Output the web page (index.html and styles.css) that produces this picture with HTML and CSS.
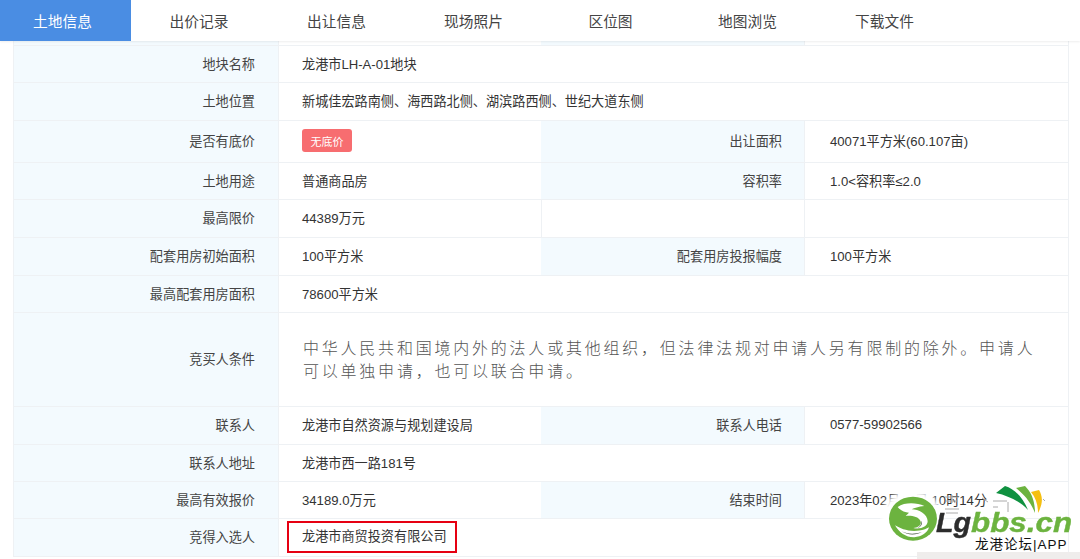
FILE: index.html
```html
<!DOCTYPE html>
<html lang="zh">
<head>
<meta charset="utf-8">
<title>土地信息</title>
<link rel="stylesheet" href="styles.css">
</head>
<body>
<nav class="tabs">
  <a class="tab active">土地信息</a>
  <a class="tab">出价记录</a>
  <a class="tab">出让信息</a>
  <a class="tab">现场照片</a>
  <a class="tab">区位图</a>
  <a class="tab">地图浏览</a>
  <a class="tab">下载文件</a>
</nav>
<main class="sheet">
  <div class="row r-stub"><div class="lab"></div><div class="val"></div><div class="lab"></div><div class="val"></div></div>
  <div class="row r37"><div class="lab">地块名称</div><div class="val wide">龙港市LH-A-01地块</div></div>
  <div class="row r38"><div class="lab">土地位置</div><div class="val wide">新城佳宏路南侧、海西路北侧、湖滨路西侧、世纪大道东侧</div></div>
  <div class="row r42"><div class="lab">是否有底价</div><div class="val"><span class="tag">无底价</span></div><div class="lab">出让面积</div><div class="val">40071平方米(60.107亩)</div></div>
  <div class="row r37"><div class="lab">土地用途</div><div class="val">普通商品房</div><div class="lab">容积率</div><div class="val">1.0&lt;容积率≤2.0</div></div>
  <div class="row r38"><div class="lab">最高限价</div><div class="val">44389万元</div><div class="val blank"></div><div class="val"></div></div>
  <div class="row r38"><div class="lab">配套用房初始面积</div><div class="val">100平方米</div><div class="lab">配套用房投报幅度</div><div class="val">100平方米</div></div>
  <div class="row r37"><div class="lab">最高配套用房面积</div><div class="val wide">78600平方米</div></div>
  <div class="row r94"><div class="lab">竞买人条件</div><div class="val wide"><p class="terms">中华人民共和国境内外的法人或其他组织，但法律法规对申请人另有限制的除外。申请人可以单独申请，也可以联合申请。</p></div></div>
  <div class="row r38"><div class="lab">联系人</div><div class="val">龙港市自然资源与规划建设局</div><div class="lab">联系人电话</div><div class="val">0577-59902566</div></div>
  <div class="row r37"><div class="lab">联系人地址</div><div class="val wide">龙港市西一路181号</div></div>
  <div class="row r37"><div class="lab">最高有效报价</div><div class="val">34189.0万元</div><div class="lab">结束时间</div><div class="val">2023年02月14日 10时14分</div></div>
  <div class="row r38"><div class="lab">竞得入选人</div><div class="val wide"><span class="winner">龙港市商贸投资有限公司</span></div></div>
</main>
<div class="corner-bar"></div>
<div class="logo">
  <svg class="logo-art" viewBox="880 483 200 76" width="200" height="76" aria-hidden="true">
    <defs><filter id="soft" x="-30%" y="-30%" width="160%" height="160%"><feGaussianBlur stdDeviation="2.5"/></filter></defs>
    <ellipse cx="912" cy="517" rx="31" ry="27" fill="#fff" filter="url(#soft)"/>
    <g stroke="#aaa" stroke-width="1" fill="none">
      <path d="M945 497h14M946 501h12M945 509h14M946 513h12M952 495v8"/>
      <path d="M993 501h14M1008 502v10M993 507h5M982 498l6 4M1043 499l2 2"/>
    </g>
    <g transform="translate(885 492) scale(.3333)">
      <ellipse cx="84" cy="80" rx="72" ry="66" fill="#6cb33f"/>
      <path d="M38 45C60 30 95 32 118 42 100 44 88 48 80 52 100 52 128 66 128 88 128 104 105 114 85 108 100 106 112 98 106 86 100 74 80 70 62 72L72 62C60 60 48 58 38 45z" fill="#fff"/>
      <path d="M30 100C50 112 80 124 120 112L132 106C128 122 110 134 88 136 64 137 42 122 30 100z" fill="#fff"/>
      <path d="M50 118C66 126 88 128 110 120 96 130 66 130 50 118zM90 110C100 108 112 100 108 86 116 96 106 108 90 110z" fill="#4a5a44"/>
    </g>
    <path d="M996 493L1005 486C1015 489 1023 498 1028 510 1022 503 1010 496 996 493z" fill="#0f9140"/>
    <path d="M1016 488L1025 486C1031 492 1035 500 1035 513 1031 503 1025 495 1016 488z" fill="#6cb33f"/>
    <path d="M1031 492L1039 490C1042 495 1044 502 1038 513 1038 505 1036 498 1031 492z" fill="#f5bf10"/>
  </svg>
  <span class="logo-lg">Lg</span>
  <span class="logo-bbs">bbs.cn</span>
  <span class="logo-sub">龙港论坛|APP</span>
</div>
</body>
</html>
```
FILE: styles.css
```css
* { box-sizing: border-box; }
html, body { margin: 0; height: 559px; overflow: hidden; background: #fff; }
body { font-family: "Liberation Sans", "Noto Sans CJK SC", sans-serif; font-size: 13.15px; color: #333; position: relative; }
.tabs { display: flex; height: 41px; background: #fff; position: relative; z-index: 2; box-shadow: 0 1px 2px rgba(0,0,0,.07); }
.tab { width: 137px; flex: none; display: flex; align-items: center; justify-content: center; font-size: 14.7px; color: #444; padding-right: 2px; }
.tab.active { width: 131px; background: #4a8de3; color: #fff; padding-right: 6px; }
.tab:nth-child(2) { width: 138px; }
.sheet { width: 1056px; margin-left: 13px; border-left: 1px solid #eef1f4; border-right: 1px solid #eef1f4; }
.row { display: grid; grid-template-columns: 265px 262px 264px 1fr; border-bottom: 1px solid #eef1f4; }
.r-stub { height: 5px; }
.r37 { height: 37px; }
.r38 { height: 38px; }
.r42 { height: 42px; }
.r94 { height: 94px; }
.lab { background: #f3fafe; padding: 0 23px 2px 0; display: flex; align-items: center; justify-content: flex-end; color: #444; border-right: 1px solid #eef1f4; }
.lab:nth-child(3) { padding-right: 22px; }
.val { padding: 0 0 2px 23px; display: flex; align-items: center; color: #333; }
.val:nth-child(4) { padding-left: 25px; }
.val.blank { border-right: 1px solid #eef1f4; border-left: 1px solid #eef1f4; }
.val.wide { grid-column: 2 / 5; }
.tag { background: #f76d70; color: #fff; font-size: 11px; width: 50px; height: 23px; border-radius: 3px; display: flex; align-items: center; justify-content: center; }
.terms { margin: 0; width: 745px; padding: 1px 0 0 1px; font-family: "Noto Sans CJK SC", sans-serif; font-weight: 300; font-size: 16px; line-height: 23px; letter-spacing: 2.78px; color: #555; }
.winner { border: 2px solid #e60012; padding: 5px 8px 5px 13px; margin: 0 0 0 -15px; line-height: 18px; white-space: nowrap; }
.corner-bar { position: absolute; left: 917px; top: 552px; width: 163px; height: 7px; background: #efedec; z-index: 3; }
.logo { position: absolute; left: 880px; top: 483px; width: 200px; height: 76px; z-index: 4; }
.logo-art { position: absolute; left: 0; top: 0; }
.logo-lg, .logo-bbs { position: absolute; top: 25px; font-family: "Liberation Sans", sans-serif; font-weight: 700; font-style: italic; font-size: 27.5px; line-height: 30px; transform-origin: left center; -webkit-text-stroke: .4px currentColor; }
.logo-lg { left: 56px; color: #2c2c2c; transform: scaleX(1.04); }
.logo-bbs { left: 91px; color: #6cb33f; transform: scaleX(1.14); }
.logo-sub { position: absolute; left: 95px; top: 53px; font-size: 13.5px; line-height: 17px; color: #111; letter-spacing: 1px; white-space: nowrap; }
```
